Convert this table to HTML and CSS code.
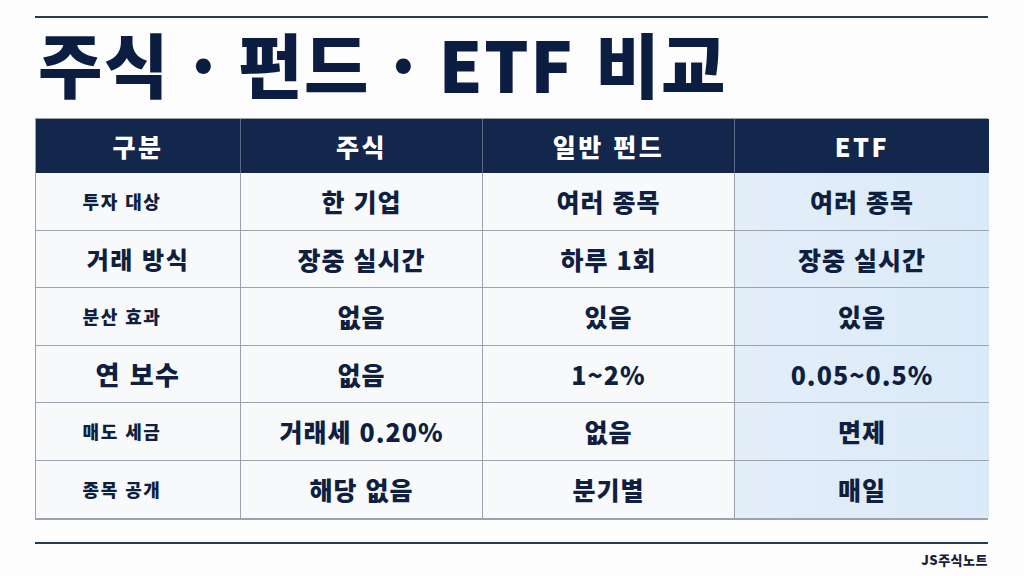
FILE: index.html
```html
<!DOCTYPE html>
<html lang="ko">
<head>
<meta charset="utf-8">
<title>주식 · 펀드 · ETF 비교</title>
<link rel="stylesheet" href="styles.css">
</head>
<body>
<div class="page">
  <div class="rule rule-top"></div>
  <h1 class="title">주식 · 펀드 · ETF 비교</h1>
  <div class="table">
    <div class="cell head">구분</div>
    <div class="cell head">주식</div>
    <div class="cell head">일반 펀드</div>
    <div class="cell head">ETF</div>

    <div class="cell label sm">투자 대상</div>
    <div class="cell">한 기업</div>
    <div class="cell">여러 종목</div>
    <div class="cell etf">여러 종목</div>

    <div class="cell label lg">거래 방식</div>
    <div class="cell">장중 실시간</div>
    <div class="cell">하루 1회</div>
    <div class="cell etf">장중 실시간</div>

    <div class="cell label sm">분산 효과</div>
    <div class="cell">없음</div>
    <div class="cell">있음</div>
    <div class="cell etf">있음</div>

    <div class="cell label xl">연 보수</div>
    <div class="cell">없음</div>
    <div class="cell">1~2%</div>
    <div class="cell etf">0.05~0.5%</div>

    <div class="cell label sm">매도 세금</div>
    <div class="cell">거래세 0.20%</div>
    <div class="cell">없음</div>
    <div class="cell etf">면제</div>

    <div class="cell label sm">종목 공개</div>
    <div class="cell">해당 없음</div>
    <div class="cell">분기별</div>
    <div class="cell etf">매일</div>
  </div>
  <div class="rule rule-bottom"></div>
  <div class="brand">JS주식노트</div>
</div>
</body>
</html>
```

FILE: styles.css
```css
* { box-sizing: border-box; margin: 0; padding: 0; }
html, body {
  width: 1024px;
  height: 576px;
  overflow: hidden;
  background: #fdfdfd;
}
body {
  font-family: "Noto Sans CJK KR", "Noto Sans", sans-serif;
  color: #0f1f3f;
}
.page {
  padding: 16px 36px 0 35px;
  display: flex;
  flex-direction: column;
}
.rule {
  height: 2px;
  background: #2a3a55;
}
.title {
  font-size: 70px;
  font-weight: 900;
  line-height: 1;
  color: #0b1d40;
  padding: 10px 0 0 3px;
  height: 100px;
  letter-spacing: 1.5px;
  white-space: nowrap;
}
.table {
  display: grid;
  grid-template-columns: 205px 242px 252px 254px;
  grid-template-rows: 54px repeat(6, 57.5px);
  border: 1px solid #9aa2ae;
  border-right-width: 2px;
  border-bottom-width: 2px;
}
.cell {
  display: flex;
  align-items: center;
  justify-content: center;
  border-right: 1px solid #9aa2ae;
  border-bottom: 1px solid #9aa2ae;
  background: #f8f9fb;
  font-size: 25px;
  letter-spacing: 1px;
  font-weight: 900;
  color: #0f1f3f;
  white-space: nowrap;
}
.cell:nth-child(4n) { border-right: none; }
.table .cell:nth-last-child(-n+4) { border-bottom: none; }
.head {
  background: #13264b;
  color: #ffffff;
  font-size: 25px;
  letter-spacing: 2.5px;
  border-right-color: #5a6a85;
  border-bottom: none;
}
.etf {
  background: linear-gradient(90deg, #e3eef9, #dbeaf8);
}
.label.sm { font-size: 18px; letter-spacing: 1.5px; padding-right: 32px; }
.label.lg { font-size: 24px; letter-spacing: 1.5px; }
.label.xl { font-size: 26px; letter-spacing: 1.5px; }
.rule-bottom {
  margin-top: 22px;
}
.brand {
  align-self: flex-end;
  margin-top: 6px;
  font-size: 13px;
  letter-spacing: 0.5px;
  font-weight: 900;
  color: #16223a;
}
```
